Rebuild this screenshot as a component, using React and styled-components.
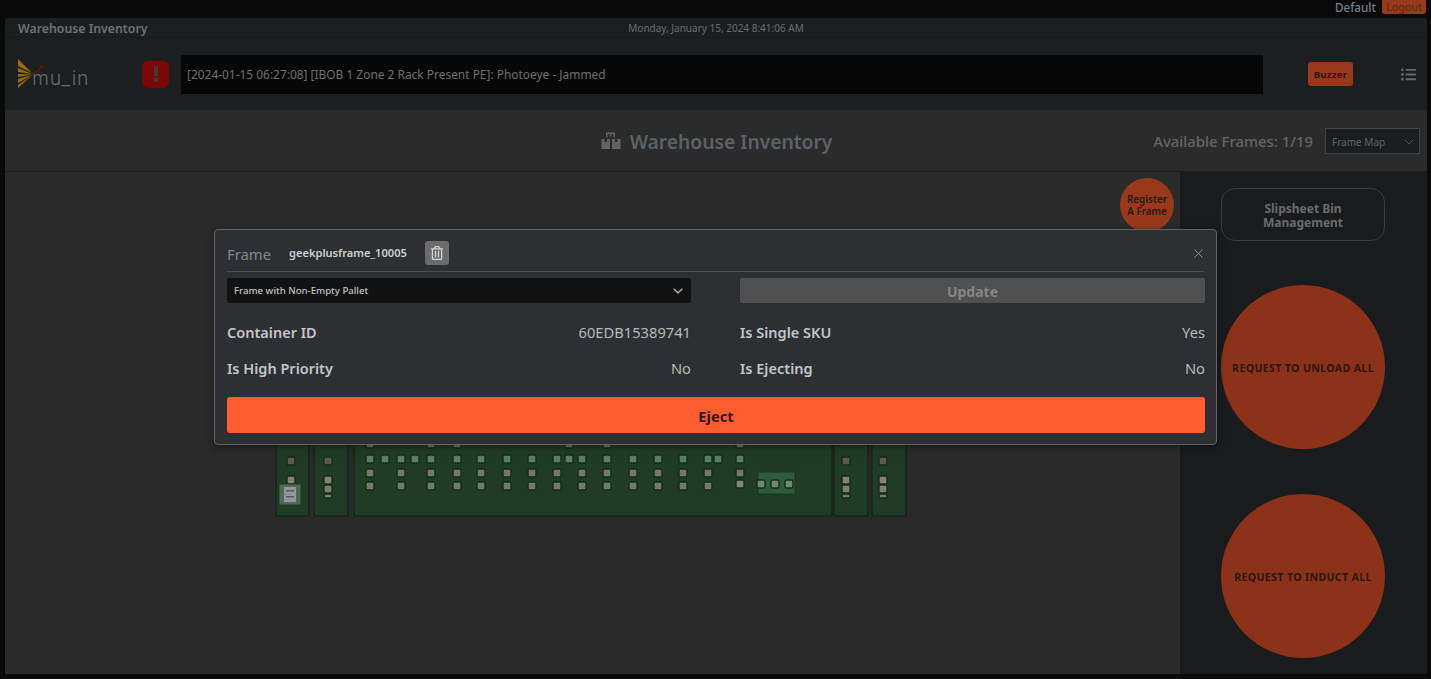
import React from "react";
import styled, { createGlobalStyle } from "styled-components";
import { FaExclamation, FaListUl, FaRegTrashAlt } from "react-icons/fa";
import { ChevronDown, X } from "lucide-react";

const GlobalStyle = createGlobalStyle`
  html, body {
    margin: 0;
    height: 100%;
    overflow: hidden;
    background: #0a0a0a;
    font-family: "Noto Sans", "Open Sans", sans-serif;
  }
  * { box-sizing: border-box; }
`;

const Page = styled.div`
  position: relative;
  width: 1431px;
  height: 679px;
  padding: 0 4px 5px 5px;
  display: flex;
  flex-direction: column;
`;
const TopBar = styled.div`
  height: 18px;
  display: flex;
  justify-content: flex-end;
  align-items: flex-start;
  gap: 6px;
  padding-right: 1px;
`;
const UserName = styled.span`
  color: #7b7e88;
  font-size: 11.7px;
  line-height: 14px;
  font-weight: 500;
`;
const Logout = styled.button`
  width: 44px;
  height: 14px;
  padding: 0;
  border: 0;
  border-radius: 0 0 3px 3px;
  background: #98391c;
  color: #5f2a1a;
  font: 500 10.5px/13px "Noto Sans", sans-serif;
`;
const TitleBar = styled.div`
  position: relative;
  height: 20px;
  padding-top: 1px;
  display: flex;
  align-items: center;
  justify-content: center;
  background: #1d1e20;
  border-radius: 3px 3px 0 0;
  border-bottom: 1px solid #18191a;
`;
const AppTitle = styled.span`
  position: absolute;
  left: 13px;
  top: 2px;
  color: #6e7072;
  font-size: 12.3px;
  font-weight: 600;
`;
const DateText = styled.span`
  color: #6a6c6e;
  font-size: 10px;
`;
const AlarmRow = styled.div`
  height: 72px;
  display: flex;
  align-items: center;
  background: #1d1e20;
  padding: 0 11px 0 13px;
`;
const Logo = styled.div`
  width: 124px;
  height: 30px;
  position: relative;
  flex: none;
`;
const LogoWord = styled.span`
  position: absolute;
  left: 14px;
  top: 6px;
  color: #69696b;
  font: 300 19.5px/26px "Inter", sans-serif;
  letter-spacing: 0.8px;
`;
const AlarmIcon = styled.div`
  width: 27px;
  height: 27px;
  flex: none;
  display: flex;
  align-items: center;
  justify-content: center;
  border-radius: 6px;
  background: #7c0707;
  color: #453a3a;
  font-size: 16px;
`;
const MessageBar = styled.div`
  width: 1082px;
  height: 39px;
  flex: none;
  margin-left: 12px;
  display: flex;
  align-items: center;
  padding-left: 6px;
  background: #070707;
  color: #6f7072;
  font-size: 11.93px;
`;
const Buzzer = styled.button`
  width: 45px;
  height: 24px;
  flex: none;
  margin-left: 45px;
  padding: 1px 0 0;
  border: 0;
  border-radius: 3px;
  background: #98391c;
  color: #2a1712;
  font: 700 9.5px "Noto Sans", sans-serif;
  letter-spacing: 0.3px;
`;
const MenuIcon = styled.div`
  flex: none;
  margin-left: auto;
  display: flex;
  color: #66686a;
  font-size: 15px;
`;
const InventoryHead = styled.div`
  position: relative;
  height: 62px;
  flex: none;
  display: flex;
  align-items: center;
  justify-content: center;
  background: #2b2b2b;
  border-bottom: 1px solid #1b1b1b;
`;
const Heading = styled.h1`
  margin: 2px 0 0 1px;
  display: flex;
  align-items: center;
  gap: 9px;
  color: #5d6167;
  font-size: 19.25px;
  font-weight: 600;
`;
const HeadingIcon = styled.svg`
  width: 20px;
  height: 19px;
  margin-top: -3px;
  flex: none;
`;
const FrameInfo = styled.div`
  position: absolute;
  right: 7px;
  top: 18px;
  display: flex;
  align-items: center;
  gap: 12px;
  color: #636567;
  font-size: 14.9px;
  font-weight: 500;
`;
const SmallSelect = styled.div`
  width: 95px;
  height: 26px;
  display: flex;
  align-items: center;
  justify-content: space-between;
  padding: 1px 2px 0 6px;
  background: #1c1d1f;
  border: 1px solid #434446;
  color: #626466;
  font-size: 10px;
  font-weight: 400;
`;
const Body = styled.div`
  flex: 1;
  min-height: 0;
  display: flex;
`;
const Canvas = styled.div`
  width: 1175px;
  flex: none;
  display: flex;
  flex-direction: column;
  background: #2b2b2b;
  padding: 6px 6px 0 265px;
`;
const RegisterButton = styled.button`
  width: 54px;
  height: 54px;
  align-self: flex-end;
  flex: none;
  padding: 0;
  border: 0;
  border-radius: 50%;
  background: #98391c;
  color: #2a1712;
  font: 600 9.9px/12px "Noto Sans", sans-serif;
`;
const MapDrawing = styled.svg`
  display: block;
  flex: none;
`;
const SidePanel = styled.div`
  flex: 1;
  display: flex;
  flex-direction: column;
  align-items: center;
  background: #1a1b1d;
  padding: 16px 1px 0 0;
`;
const OutlineButton = styled.button`
  width: 164px;
  height: 53px;
  padding: 2px 30px 0;
  background: transparent;
  border: 1px solid #3b3c3e;
  border-radius: 14px;
  color: #696a6c;
  font: 700 12px/14px "Noto Sans", sans-serif;
`;
const BigCircle = styled.button`
  width: 164px;
  height: 164px;
  flex: none;
  margin-top: ${(p) => p.$gap}px;
  padding: 2px 0 0;
  border: 0;
  border-radius: 50%;
  background: #8c3219;
  color: #2d1611;
  font: 700 10.6px "Noto Sans", sans-serif;
  letter-spacing: 0.35px;
`;
const Modal = styled.div`
  position: absolute;
  left: 214px;
  top: 229px;
  width: 1003px;
  height: 216px;
  padding: 0 12px;
  background: #2e2f33;
  border: 1px solid #626365;
  border-radius: 4px;
  box-shadow: 0 2px 8px rgba(0, 0, 0, 0.4);
`;
const ModalHead = styled.div`
  height: 42px;
  padding-top: 4px;
  display: flex;
  align-items: center;
  border-bottom: 1px solid #4e4f51;
`;
const FrameLabel = styled.span`
  width: 62px;
  color: #85878a;
  font-size: 14.8px;
  margin-top: 2px;
`;
const FrameName = styled.span`
  color: #cfd0d2;
  font-size: 11.1px;
  font-weight: 600;
`;
const TrashButton = styled.button`
  width: 24px;
  height: 24px;
  margin-left: 18px;
  padding: 0;
  display: flex;
  align-items: center;
  justify-content: center;
  border: 0;
  border-radius: 3px;
  background: #6c6c6c;
  color: #d0d0d0;
  font-size: 14px;
`;
const CloseButton = styled.button`
  margin: 2px -2px 0 auto;
  padding: 0;
  display: flex;
  background: none;
  border: 0;
  color: #949597;
`;
const ModalGrid = styled.div`
  display: grid;
  grid-template-columns: 464px 465px;
  column-gap: 49px;
  margin-top: 6px;
`;
const TypeSelect = styled.div`
  height: 25px;
  display: flex;
  align-items: center;
  justify-content: space-between;
  padding: 0 5px 0 7px;
  background: #121212;
  border-radius: 2px;
  color: #c2c3c5;
  font-size: 9.65px;
  font-weight: 500;
`;
const UpdateButton = styled.button`
  height: 25px;
  padding: 1px 0 0;
  border: 0;
  border-radius: 2px;
  background: #505050;
  color: #858585;
  font: 700 14px "Noto Sans", sans-serif;
`;
const InfoRow = styled.div`
  height: 36px;
  display: flex;
  align-items: center;
  justify-content: space-between;
  margin-top: ${(p) => (p.$first ? 11 : 0)}px;
`;
const InfoLabel = styled.span`
  color: #c3c5c8;
  font-size: 14.5px;
  font-weight: 600;
`;
const InfoValue = styled.span`
  color: #b8b9bc;
  font-size: 14.7px;
`;
const EjectButton = styled.button`
  display: block;
  width: 978px;
  height: 36px;
  margin-top: 11px;
  padding: 1px 0 0;
  border: 0;
  border-radius: 3px;
  background: #ff5c2f;
  color: #2d1a14;
  font: 700 14.7px "Noto Sans", sans-serif;
`;

// map offsets: the drawing starts at page x 270, y 232
const ox = 270;
const oy = 232;

const greenRow = [370, 385, 401, 415, 431, 457, 481, 507, 532, 557, 569, 582, 607, 633, 658, 683, 708, 718, 740];
const lowerRow = [370, 401, 431, 457, 481, 507, 532, 557, 582, 607, 633, 658, 683, 708];
const peekRow = [370, 431, 457, 569, 607, 740];
const columns = [291, 328, 846, 883];

function Slot({ x, y, fill, w = 8, h = 8 }) {
  return (
    <rect
      x={x - ox - w / 2}
      y={y - oy - h / 2}
      width={w}
      height={h}
      rx="1.5"
      fill={fill}
      stroke="#182a1d"
      strokeWidth="1.4"
    />
  );
}

function Rack({ x, w, fill = "#203c26" }) {
  return (
    <rect
      x={x - ox}
      y={0}
      width={w}
      height={516 - oy}
      rx="2"
      fill={fill}
      stroke="#16271a"
      strokeWidth="1.5"
    />
  );
}

function FrameMap() {
  return (
    <MapDrawing width="640" height="288" viewBox="0 0 640 288">
      <Rack x={276} w={33} />
      <Rack x={314} w={34} />
      <Rack x={354} w={478} />
      <Rack x={834} w={34} />
      <Rack x={872} w={34} />
      {peekRow.map((x) => <Slot key={`p${x}`} x={x} y={444} fill="#5e7a64" />)}
      {greenRow.map((x) => <Slot key={`g${x}`} x={x} y={459} fill="#548068" />)}
      {lowerRow.map((x) => <Slot key={`a${x}`} x={x} y={473} fill="#707c66" />)}
      {lowerRow.map((x) => <Slot key={`b${x}`} x={x} y={486} fill="#707c66" />)}
      <Slot x={740} y={473} fill="#707c66" />
      <Slot x={740} y={484} fill="#7d8773" />
      {columns.map((x) => (
        <g key={x}>
          <Slot x={x} y={461} fill="#5e5a49" />
          <Slot x={x} y={480} fill="#85826f" />
          {x !== 291 && <Slot x={x} y={489} fill="#7a8369" />}
          {x !== 291 && <Slot x={x} y={496} fill="#707c64" h={4} />}
        </g>
      ))}
      <rect x={279 - ox} y={484 - oy} width={22} height={21} fill="#4d6b53" stroke="#24382a" />
      <rect x={284 - ox} y={487 - oy} width={12} height={15} fill="#93969b" />
      <rect x={286 - ox} y={490 - oy} width={8} height={1.5} fill="#55585d" />
      <rect x={286 - ox} y={496 - oy} width={8} height={1.5} fill="#55585d" />
      <rect x={758 - ox} y={472 - oy} width={37} height={22} fill="#2f5c3a" stroke="#1c3622" />
      {[761, 775, 789].map((x) => <Slot key={x} x={x} y={484} fill="#6f8c68" />)}
    </MapDrawing>
  );
}

export default function App() {
  return (
    <Page>
      <GlobalStyle />
      <TopBar>
        <UserName>Default</UserName>
        <Logout>Logout</Logout>
      </TopBar>
      <TitleBar>
        <AppTitle>Warehouse Inventory</AppTitle>
        <DateText>Monday, January 15, 2024 8:41:06 AM</DateText>
      </TitleBar>
      <AlarmRow>
        <Logo>
          <svg width="34" height="30" viewBox="0 0 34 30">
            <path d="M0 0 L14 14 L0 7 Z M0 9 L14 15 L0 13 Z M0 15 L14 15.5 L0 18 Z M0 20 L14 16 L0 24 Z M0 26 L14 16.5 L0 29 Z" fill="#9c6c10" />
            <path d="M14 15 L22 11 M21 11 l3 -5 M23 9 l3 -2 M27 2 l1 -1" stroke="#6a1410" strokeWidth="1.4" fill="none" />
          </svg>
          <LogoWord>mu_in</LogoWord>
        </Logo>
        <AlarmIcon><FaExclamation /></AlarmIcon>
        <MessageBar>[2024-01-15 06:27:08] [IBOB 1 Zone 2 Rack Present PE]: Photoeye - Jammed</MessageBar>
        <Buzzer>Buzzer</Buzzer>
        <MenuIcon><FaListUl /></MenuIcon>
      </AlarmRow>
      <InventoryHead>
        <Heading>
          <HeadingIcon viewBox="0 0 20 19" fill="#626365">
            <path d="M5 1.5h9v5h-1.5V3H6.5v3.5H5z M8.5 3.5h2v2h-2z" />
            <path d="M0.5 8h8.5v10H0.5z M11 8h8.5v10H11z" />
            <path d="M3.5 8h2.5v3H3.5z M14 8h2.5v3H14z" fill="#2b2b2b" />
          </HeadingIcon>
          Warehouse Inventory
        </Heading>
        <FrameInfo>
          Available Frames: 1/19
          <SmallSelect>
            Frame Map
            <ChevronDown size={16} strokeWidth={1.2} />
          </SmallSelect>
        </FrameInfo>
      </InventoryHead>
      <Body>
        <Canvas>
          <RegisterButton>Register<br />A Frame</RegisterButton>
          <FrameMap />
        </Canvas>
        <SidePanel>
          <OutlineButton>Slipsheet Bin Management</OutlineButton>
          <BigCircle $gap={44}>REQUEST TO UNLOAD ALL</BigCircle>
          <BigCircle $gap={45}>REQUEST TO INDUCT ALL</BigCircle>
        </SidePanel>
      </Body>
      <Modal>
        <ModalHead>
          <FrameLabel>Frame</FrameLabel>
          <FrameName>geekplusframe_10005</FrameName>
          <TrashButton><FaRegTrashAlt /></TrashButton>
          <CloseButton><X size={15} strokeWidth={1.4} /></CloseButton>
        </ModalHead>
        <ModalGrid>
          <TypeSelect>
            Frame with Non-Empty Pallet
            <ChevronDown size={16} strokeWidth={1.6} />
          </TypeSelect>
          <UpdateButton>Update</UpdateButton>
          <InfoRow $first><InfoLabel>Container ID</InfoLabel><InfoValue>60EDB15389741</InfoValue></InfoRow>
          <InfoRow $first><InfoLabel>Is Single SKU</InfoLabel><InfoValue>Yes</InfoValue></InfoRow>
          <InfoRow><InfoLabel>Is High Priority</InfoLabel><InfoValue>No</InfoValue></InfoRow>
          <InfoRow><InfoLabel>Is Ejecting</InfoLabel><InfoValue>No</InfoValue></InfoRow>
        </ModalGrid>
        <EjectButton>Eject</EjectButton>
      </Modal>
    </Page>
  );
}
